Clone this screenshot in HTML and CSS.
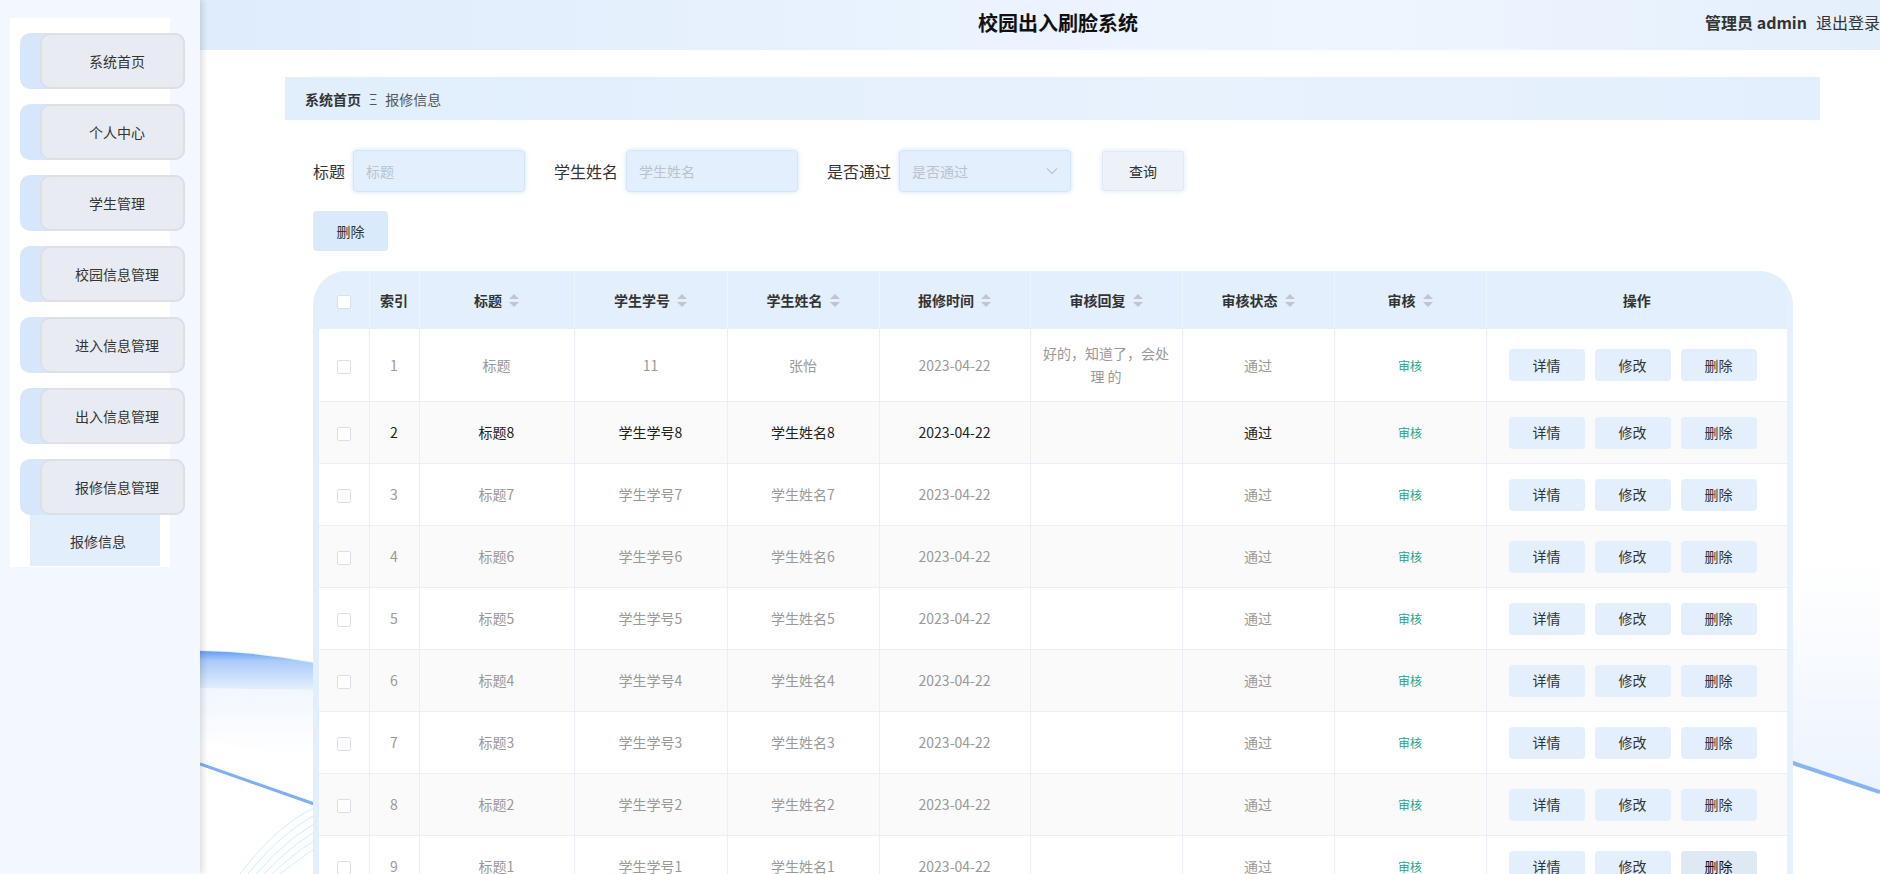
FILE: index.html
```html
<!DOCTYPE html>
<html lang="zh-CN">
<head>
<meta charset="utf-8">
<title>校园出入刷脸系统</title>
<link rel="stylesheet" href="styles.css">
</head>
<body>
<div class="app">
  <aside class="sidebar">
    <div class="menu">
      <div class="item"><div class="item-inner">系统首页</div></div>
      <div class="item"><div class="item-inner">个人中心</div></div>
      <div class="item"><div class="item-inner">学生管理</div></div>
      <div class="item"><div class="item-inner">校园信息管理</div></div>
      <div class="item"><div class="item-inner">进入信息管理</div></div>
      <div class="item"><div class="item-inner">出入信息管理</div></div>
      <div class="item"><div class="item-inner">报修信息管理</div></div>
      <div class="sub-item">报修信息</div>
    </div>
  </aside>
  <main class="main">
    <svg class="bg-waves" width="1680" height="874" viewBox="0 0 1680 874" xmlns="http://www.w3.org/2000/svg">
      <defs>
        <linearGradient id="band" x1="0" y1="0" x2="0" y2="1">
          <stop offset="0" stop-color="#5f9ff5"/>
          <stop offset="0.25" stop-color="#a9cbf8"/>
          <stop offset="1" stop-color="#e6f0fd"/>
        </linearGradient>
        <linearGradient id="soft" x1="0" y1="0" x2="0" y2="1">
          <stop offset="0" stop-color="#eaf3fe"/>
          <stop offset="1" stop-color="#ffffff"/>
        </linearGradient>
        <linearGradient id="softr" x1="0" y1="0" x2="0" y2="1">
          <stop offset="0" stop-color="#ffffff"/>
          <stop offset="1" stop-color="#edf4fe"/>
        </linearGradient>
      </defs>
      <path d="M0 650 Q60 651 120 663 L120 760 L0 740 Z" fill="url(#soft)"/>
      <path d="M0 651 Q60 652 120 664 L120 690 L0 688 Z" fill="url(#band)"/>
      <path d="M0 764 L120 806" stroke="#7eaef3" stroke-width="3" fill="none"/>
      <g fill="none" stroke="#cdeffb" stroke-width="1">
        <path d="M40 874 Q80 820 130 800"/>
        <path d="M48 874 Q86 826 130 808"/>
        <path d="M56 874 Q92 832 130 816"/>
        <path d="M64 874 Q98 838 130 824"/>
        <path d="M72 874 Q104 844 130 832"/>
        <path d="M80 874 Q110 850 130 840"/>
      </g>
      <path d="M1590 560 L1680 560 L1680 790 L1590 760 Z" fill="url(#softr)"/>
      <path d="M1590 762 L1680 792" stroke="#86b4f4" stroke-width="4" fill="none"/>
    </svg>

    <header class="topbar">
      <div class="spacer"></div>
      <div class="title">校园出入刷脸系统</div>
      <div class="user">
        <span class="role">管理员 admin</span>
        <span class="logout">退出登录</span>
      </div>
    </header>

    <section class="content">
      <nav class="breadcrumb">
        <span class="crumb-home">系统首页</span>
        <span class="crumb-sep">Ξ</span>
        <span class="crumb-cur">报修信息</span>
      </nav>

      <div class="search-row">
        <label class="field">
          <span class="field-label">标题</span>
          <span class="input"><span class="placeholder">标题</span></span>
        </label>
        <label class="field">
          <span class="field-label">学生姓名</span>
          <span class="input"><span class="placeholder">学生姓名</span></span>
        </label>
        <label class="field">
          <span class="field-label">是否通过</span>
          <span class="input select"><span class="placeholder">是否通过</span>
            <svg class="chev" width="12" height="8" viewBox="0 0 12 8"><path d="M1 1.5 L6 6.5 L11 1.5" fill="none" stroke="#c0c4cc" stroke-width="1.2"/></svg>
          </span>
        </label>
        <button class="btn-query">查询</button>
      </div>

      <div class="action-row">
        <button class="btn-del">删除</button>
      </div>

      <div class="table-wrap">
        <table class="grid">
          <colgroup>
            <col class="c-sel"><col class="c-idx"><col class="c-a"><col class="c-b"><col class="c-c"><col class="c-d"><col class="c-e"><col class="c-f"><col class="c-g"><col class="c-op">
          </colgroup>
          <thead>
            <tr>
              <th><span class="cb"></span></th>
              <th>索引</th>
              <th>标题<i class="caret"></i></th>
              <th>学生学号<i class="caret"></i></th>
              <th>学生姓名<i class="caret"></i></th>
              <th>报修时间<i class="caret"></i></th>
              <th>审核回复<i class="caret"></i></th>
              <th>审核状态<i class="caret"></i></th>
              <th>审核<i class="caret"></i></th>
              <th>操作</th>
            </tr>
          </thead>
          <tbody>
            <tr>
              <td><span class="cb"></span></td><td>1</td><td>标题</td><td>11</td><td>张怡</td><td>2023-04-22</td><td>好的，知道了，会处理 的</td><td>通过</td><td><span class="audit">审核</span></td>
              <td><div class="ops"><span class="op">详情</span><span class="op">修改</span><span class="op">删除</span></div></td>
            </tr>
            <tr class="hover">
              <td><span class="cb"></span></td><td>2</td><td>标题8</td><td>学生学号8</td><td>学生姓名8</td><td>2023-04-22</td><td></td><td>通过</td><td><span class="audit">审核</span></td>
              <td><div class="ops"><span class="op">详情</span><span class="op">修改</span><span class="op">删除</span></div></td>
            </tr>
            <tr>
              <td><span class="cb"></span></td><td>3</td><td>标题7</td><td>学生学号7</td><td>学生姓名7</td><td>2023-04-22</td><td></td><td>通过</td><td><span class="audit">审核</span></td>
              <td><div class="ops"><span class="op">详情</span><span class="op">修改</span><span class="op">删除</span></div></td>
            </tr>
            <tr>
              <td><span class="cb"></span></td><td>4</td><td>标题6</td><td>学生学号6</td><td>学生姓名6</td><td>2023-04-22</td><td></td><td>通过</td><td><span class="audit">审核</span></td>
              <td><div class="ops"><span class="op">详情</span><span class="op">修改</span><span class="op">删除</span></div></td>
            </tr>
            <tr>
              <td><span class="cb"></span></td><td>5</td><td>标题5</td><td>学生学号5</td><td>学生姓名5</td><td>2023-04-22</td><td></td><td>通过</td><td><span class="audit">审核</span></td>
              <td><div class="ops"><span class="op">详情</span><span class="op">修改</span><span class="op">删除</span></div></td>
            </tr>
            <tr>
              <td><span class="cb"></span></td><td>6</td><td>标题4</td><td>学生学号4</td><td>学生姓名4</td><td>2023-04-22</td><td></td><td>通过</td><td><span class="audit">审核</span></td>
              <td><div class="ops"><span class="op">详情</span><span class="op">修改</span><span class="op">删除</span></div></td>
            </tr>
            <tr>
              <td><span class="cb"></span></td><td>7</td><td>标题3</td><td>学生学号3</td><td>学生姓名3</td><td>2023-04-22</td><td></td><td>通过</td><td><span class="audit">审核</span></td>
              <td><div class="ops"><span class="op">详情</span><span class="op">修改</span><span class="op">删除</span></div></td>
            </tr>
            <tr>
              <td><span class="cb"></span></td><td>8</td><td>标题2</td><td>学生学号2</td><td>学生姓名2</td><td>2023-04-22</td><td></td><td>通过</td><td><span class="audit">审核</span></td>
              <td><div class="ops"><span class="op">详情</span><span class="op">修改</span><span class="op">删除</span></div></td>
            </tr>
            <tr>
              <td><span class="cb"></span></td><td>9</td><td>标题1</td><td>学生学号1</td><td>学生姓名1</td><td>2023-04-22</td><td></td><td>通过</td><td><span class="audit">审核</span></td>
              <td><div class="ops"><span class="op">详情</span><span class="op">修改</span><span class="op op-hover">删除</span></div></td>
            </tr>
          </tbody>
        </table>
      </div>
    </section>
  </main>
</div>
</body>
</html>
```

FILE: styles.css
```css
* { box-sizing: border-box; }

html, body {
  margin: 0;
  padding: 0;
  width: 1880px;
  height: 874px;
  overflow: hidden;
  background: #ffffff;
  font-family: "Noto Sans CJK SC", "Noto Sans", "Liberation Sans", sans-serif;
  color: #333;
}

.app {
  display: flex;
  width: 1880px;
  height: 874px;
}

/* ---------- sidebar ---------- */
.sidebar {
  width: 200px;
  flex: 0 0 200px;
  height: 874px;
  background: #f3f8fe;
  box-shadow: 2px 0 7px rgba(0, 0, 0, 0.16);
  position: relative;
  z-index: 2;
  padding: 18px 0 0 10px;
}

.menu {
  width: 160px;
  background: #ffffff;
  padding: 15px 0 1px 0;
  display: flex;
  flex-direction: column;
  gap: 15px;
}

.item {
  margin-left: 10px;
  width: 165px;
  height: 56px;
  background: #d7e7fb;
  border-radius: 10px;
  display: flex;
}

.item-inner {
  margin-left: 20px;
  flex: 1;
  height: 56px;
  border: 2px solid #dcdfe4;
  background: #e8ecf2;
  border-radius: 10px;
  display: flex;
  align-items: center;
  justify-content: center;
  padding-left: 9px;
  font-size: 14px;
  color: #333;
}

.sub-item {
  margin: -15px 0 0 20px;
  width: 130px;
  height: 51px;
  background: #e2eefc;
  display: flex;
  align-items: center;
  justify-content: center;
  padding-left: 6px;
  font-size: 14px;
  color: #333;
}

/* ---------- main ---------- */
.main {
  flex: 1;
  position: relative;
  height: 874px;
}

.bg-waves {
  position: absolute;
  left: 0;
  top: 0;
  z-index: 0;
}

.topbar {
  position: relative;
  z-index: 1;
  height: 50px;
  display: flex;
  align-items: center;
  padding: 0 0 6px 36px;
  background: linear-gradient(90deg, #dfecfc 0%, #eaf3fe 45%, #eef5fe 70%, #e4effc 100%);
}

.spacer { flex: 1; }

.title {
  font-size: 20px;
  font-weight: bold;
  color: #111;
}

.user {
  flex: 1;
  display: flex;
  justify-content: flex-end;
  align-items: center;
  gap: 9px;
  font-size: 16px;
  white-space: nowrap;
}

.role { font-weight: bold; color: #333; }
.logout { color: #333; }

.content {
  position: relative;
  z-index: 1;
  padding: 27px 60px 0 85px;
}

.breadcrumb {
  height: 43px;
  background: linear-gradient(90deg, #e1eefc, #e8f2fd 60%, #e4effd);
  display: flex;
  align-items: center;
  padding-left: 20px;
  font-size: 14px;
}

.crumb-home { font-weight: bold; color: #333; }
.crumb-sep { margin: 0 8px; color: #555; font-size: 14px; }
.crumb-cur { color: #555; }

.search-row {
  margin: 30px 0 0 28px;
  display: flex;
  align-items: center;
  gap: 29px;
}

.field {
  display: flex;
  align-items: center;
  gap: 8px;
}

.field-label {
  font-size: 16px;
  color: #333;
}

.input {
  width: 172px;
  height: 42px;
  background: #e3effd;
  border: 1px solid #d3e5fa;
  border-radius: 4px;
  box-shadow: 0 0 5px rgba(120, 175, 240, 0.35);
  display: flex;
  align-items: center;
  padding: 0 12px;
}

.placeholder {
  font-size: 14px;
  color: #b9c3cd;
  flex: 1;
}

.btn-query {
  width: 82px;
  height: 40px;
  margin-left: 2px;
  border: 1px solid #dfe8f3;
  border-radius: 3px;
  background: #edf2f9;
  box-shadow: 0 0 5px rgba(120, 175, 240, 0.3);
  font-family: inherit;
  font-size: 14px;
  color: #333;
  padding: 0;
}

.action-row {
  margin: 19px 0 0 28px;
}

.btn-del {
  width: 75px;
  height: 40px;
  border: none;
  border-radius: 4px;
  background: #d9eafb;
  font-family: inherit;
  font-size: 14px;
  color: #333;
  padding: 0;
}

/* ---------- table ---------- */
.table-wrap {
  margin: 20px 0 0 28px;
  width: 1480px;
  padding: 0 6px;
  background: linear-gradient(90deg, #e1eefd, #e6f1fd);
  border-radius: 34px 34px 0 0;
  overflow: hidden;
}

.grid {
  width: 1468px;
  table-layout: fixed;
  border-collapse: collapse;
  font-size: 14px;
}

.c-sel { width: 50px; }
.c-idx { width: 50px; }
.c-a { width: 155px; }
.c-b { width: 153px; }
.c-c { width: 152px; }
.c-d { width: 151px; }
.c-e { width: 152px; }
.c-f { width: 152px; }
.c-g { width: 152px; }
.c-op { width: 301px; }

.grid th {
  height: 58px;
  background: #e3effd;
  font-weight: bold;
  color: #333;
  text-align: center;
  border-right: 1px solid #eef5fd;
  padding: 0;
  white-space: nowrap;
}

.grid th:last-child { border-right: none; }

.caret {
  display: inline-block;
  width: 10px;
  height: 13px;
  margin-left: 7px;
  vertical-align: -1px;
  position: relative;
}

.caret::before,
.caret::after {
  content: "";
  position: absolute;
  left: 0;
  border-left: 5px solid transparent;
  border-right: 5px solid transparent;
}

.caret::before {
  top: 0;
  border-bottom: 5px solid #c0c4cc;
}

.caret::after {
  bottom: 0;
  border-top: 5px solid #c0c4cc;
}

.grid td {
  background: #ffffff;
  color: #999;
  text-align: center;
  line-height: 23px;
  padding: 13px 10px;
  border-right: 1px solid #ebeef5;
  border-bottom: 1px solid #ebeef5;
  vertical-align: middle;
}

.grid td:last-child { border-right: none; padding-left: 22px; }

.grid tbody tr:nth-child(even) td { background: #fafafa; }

.grid tr.hover td { color: #222; background: #f8f9fa; }

.cb {
  display: inline-block;
  width: 14px;
  height: 14px;
  border: 1px solid #dcdfe6;
  border-radius: 2px;
  background: #fff;
  vertical-align: middle;
}

.audit {
  color: #1fa38a;
  font-size: 12px;
}

.ops {
  height: 35px;
  display: flex;
  align-items: center;
  justify-content: flex-start;
  gap: 10px;
}

.op {
  width: 76px;
  height: 32px;
  border-radius: 4px;
  background: #e3effd;
  color: #333;
  font-size: 14px;
  display: flex;
  align-items: center;
  justify-content: center;
}

.op-hover {
  background: #dfe9f6;
  color: #111;
}
```
